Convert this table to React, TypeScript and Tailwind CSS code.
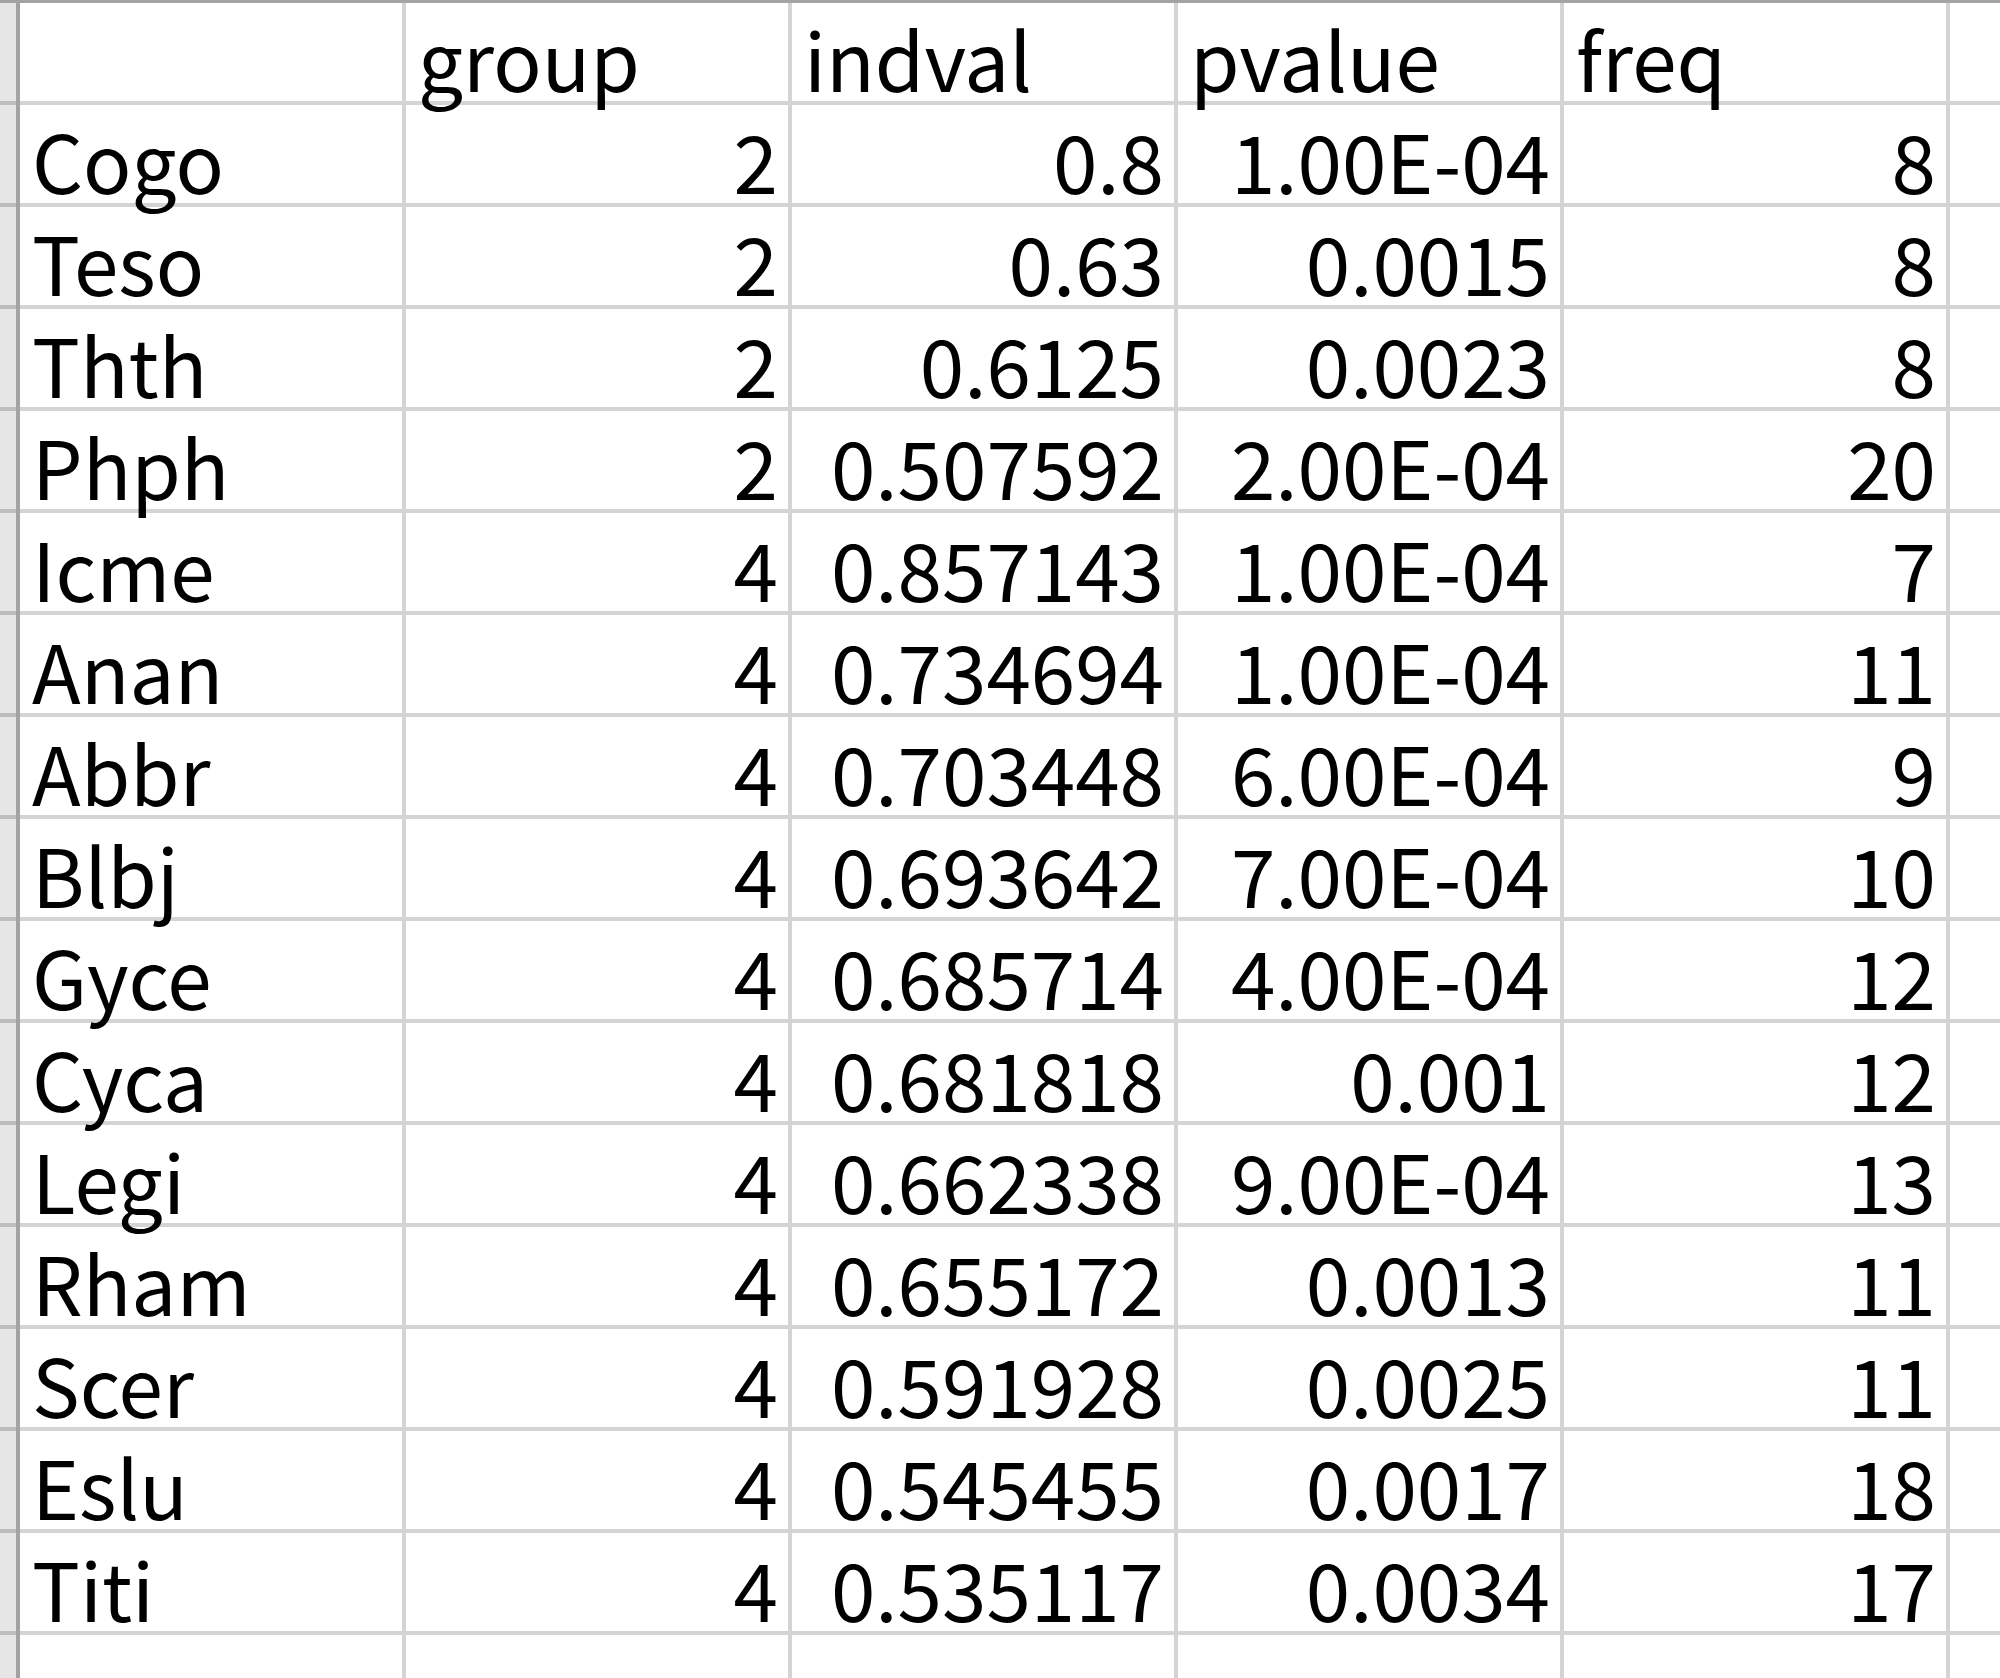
const header = ['', 'group', 'indval', 'pvalue', 'freq']

const rows: [string, string, string, string, string][] = [
  ['Cogo', '2', '0.8', '1.00E-04', '8'],
  ['Teso', '2', '0.63', '0.0015', '8'],
  ['Thth', '2', '0.6125', '0.0023', '8'],
  ['Phph', '2', '0.507592', '2.00E-04', '20'],
  ['Icme', '4', '0.857143', '1.00E-04', '7'],
  ['Anan', '4', '0.734694', '1.00E-04', '11'],
  ['Abbr', '4', '0.703448', '6.00E-04', '9'],
  ['Blbj', '4', '0.693642', '7.00E-04', '10'],
  ['Gyce', '4', '0.685714', '4.00E-04', '12'],
  ['Cyca', '4', '0.681818', '0.001', '12'],
  ['Legi', '4', '0.662338', '9.00E-04', '13'],
  ['Rham', '4', '0.655172', '0.0013', '11'],
  ['Scer', '4', '0.591928', '0.0025', '11'],
  ['Eslu', '4', '0.545455', '0.0017', '18'],
  ['Titi', '4', '0.535117', '0.0034', '17'],
]

function Row({ cells, numeric }: { cells: string[]; numeric: boolean }) {
  return (
    <div className="flex h-[102px]">
      <div className="w-[16px] shrink-0 bg-[#e6e6e6] border-b-4 border-[#bdbdbd]" />
      <div className="w-[4px] shrink-0 bg-[#a3a3a3]" />
      {cells.map((c, i) => (
        <div
          key={i}
          className={
            'w-[386px] shrink-0 border-r-4 border-b-4 border-[#d4d4d4] flex items-end pb-[4px] ' +
            (numeric && i > 0 ? 'justify-end pr-[10px]' : 'justify-start pl-[12px]')
          }
        >
          <span className="block leading-none whitespace-nowrap">{c}</span>
        </div>
      ))}
      <div className="w-[386px] shrink-0 border-b-4 border-[#d4d4d4]" />
    </div>
  )
}

export default function App() {
  return (
    <div
      className="w-[2000px] h-[1678px] overflow-hidden bg-white text-black text-[80px] border-t-[3px] border-[#a3a3a3]"
      style={{ fontFamily: '"Noto Sans CJK SC", "Liberation Sans", sans-serif' }}
    >
      <Row cells={header} numeric={false} />
      {rows.map((r, i) => (
        <Row key={i} cells={r} numeric={true} />
      ))}
      <Row cells={['', '', '', '', '']} numeric={false} />
    </div>
  )
}
